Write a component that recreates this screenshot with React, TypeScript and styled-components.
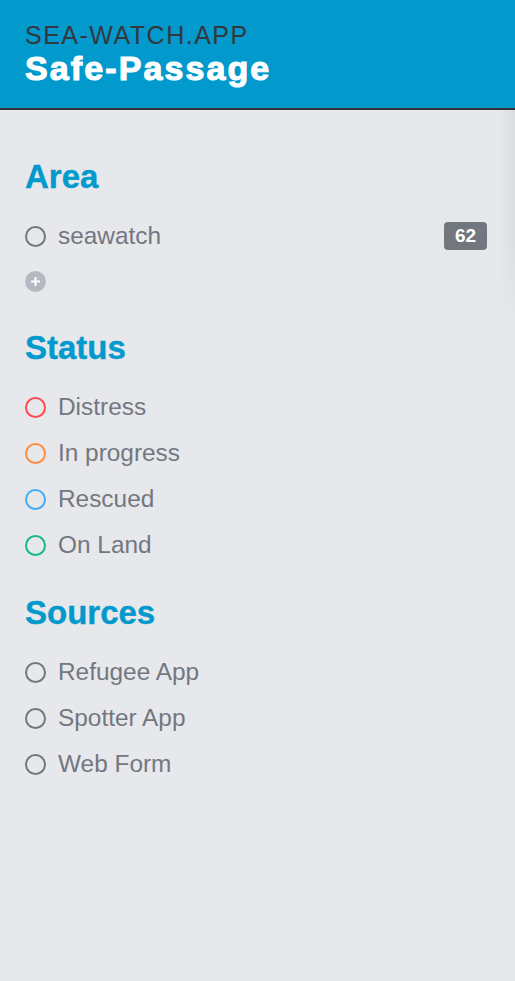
import React from "react";
import styled, { createGlobalStyle } from "styled-components";

const Global = createGlobalStyle`
  html, body { margin: 0; padding: 0; background: #e7e8ec; }
  body { font-family: "Liberation Sans", Arial, sans-serif; }
  * { box-sizing: border-box; }
`;

const Page = styled.div`
  width: 515px;
  min-height: 981px;
  display: flex;
  flex-direction: column;
  background: #e7e8ec;
`;

const Header = styled.header`
  height: 110px;
  background: #0299cd;
  border-bottom: 2px solid #2f3336;
  padding: 21px 25px 0;
  display: flex;
  flex-direction: column;
`;

const Brand = styled.div`
  font-family: "Liberation Sans", Arial, sans-serif;
  font-size: 25px;
  line-height: 28px;
  letter-spacing: 1.5px;
  color: #34383c;
`;

const Title = styled.h1`
  margin: 0;
  font-family: "Liberation Sans", Arial, sans-serif;
  font-weight: bold;
  font-size: 34px;
  line-height: 38px;
  letter-spacing: 2.1px;
  -webkit-text-stroke: 1.1px #ffffff;
  color: #ffffff;
`;

const Main = styled.main`
  position: relative;
  flex: 1;
  padding: 47px 28px 0 25px;
  &::after {
    content: "";
    position: absolute;
    top: 0;
    right: 0;
    width: 18px;
    height: 220px;
    background: linear-gradient(to right, rgba(0,0,0,0), rgba(0,0,0,0.04));
    -webkit-mask-image: linear-gradient(to bottom, #000 60%, transparent);
    mask-image: linear-gradient(to bottom, #000 60%, transparent);
    pointer-events: none;
  }
`;

const Section = styled.section<{ $after?: number }>`
  display: flex;
  flex-direction: column;
  margin-bottom: ${(p) => p.$after ?? 25}px;
`;

const Heading = styled.h2`
  margin: 0 0 16px;
  font-family: "Liberation Sans", Arial, sans-serif;
  font-weight: bold;
  font-size: 33px;
  line-height: 40px;
  -webkit-text-stroke: 0.4px #0299cd;
  color: #0299cd;
`;

const Row = styled.div<{ $h?: number }>`
  height: ${(p) => p.$h ?? 46}px;
  display: flex;
  align-items: center;
  gap: 12px;
`;

const Ring = styled.span<{ $color: string }>`
  width: 21px;
  height: 21px;
  border-radius: 50%;
  border: 2px solid ${(p) => p.$color};
  flex: none;
`;

const Label = styled.span`
  flex: 1;
  font-size: 24.4px;
  color: #737780;
  line-height: 28px;
`;

const Badge = styled.span`
  width: 43px;
  height: 28px;
  border-radius: 4px;
  background: #72767f;
  color: #fff;
  font-weight: bold;
  font-size: 19px;
  display: flex;
  align-items: center;
  justify-content: center;
`;

const AddButton = styled.span`
  width: 21px;
  height: 21px;
  border-radius: 50%;
  background: #b6b9c1;
  display: flex;
  align-items: center;
  justify-content: center;
`;

type Item = { label: string; color: string };

const status: Item[] = [
  { label: "Distress", color: "#ff4a4f" },
  { label: "In progress", color: "#ff8c42" },
  { label: "Rescued", color: "#42aef5" },
  { label: "On Land", color: "#14b88a" },
];

const sources: Item[] = [
  { label: "Refugee App", color: "#737780" },
  { label: "Spotter App", color: "#737780" },
  { label: "Web Form", color: "#737780" },
];

export default function App() {
  return (
    <Page>
      <Global />
      <Header>
        <Brand>SEA-WATCH.APP</Brand>
        <Title>Safe-Passage</Title>
      </Header>
      <Main>
        <Section $after={25}>
          <Heading>Area</Heading>
          <Row>
            <Ring $color="#737780" />
            <Label>seawatch</Label>
            <Badge>62</Badge>
          </Row>
          <Row $h={44}>
            <AddButton>
              <svg width="11" height="11" viewBox="0 0 11 11">
                <path d="M5.5 1v9M1 5.5h9" stroke="#fff" strokeWidth="2" />
              </svg>
            </AddButton>
          </Row>
        </Section>
        <Section>
          <Heading>Status</Heading>
          {status.map((s) => (
            <Row key={s.label}>
              <Ring $color={s.color} />
              <Label>{s.label}</Label>
            </Row>
          ))}
        </Section>
        <Section>
          <Heading>Sources</Heading>
          {sources.map((s) => (
            <Row key={s.label}>
              <Ring $color={s.color} />
              <Label>{s.label}</Label>
            </Row>
          ))}
        </Section>
      </Main>
    </Page>
  );
}
